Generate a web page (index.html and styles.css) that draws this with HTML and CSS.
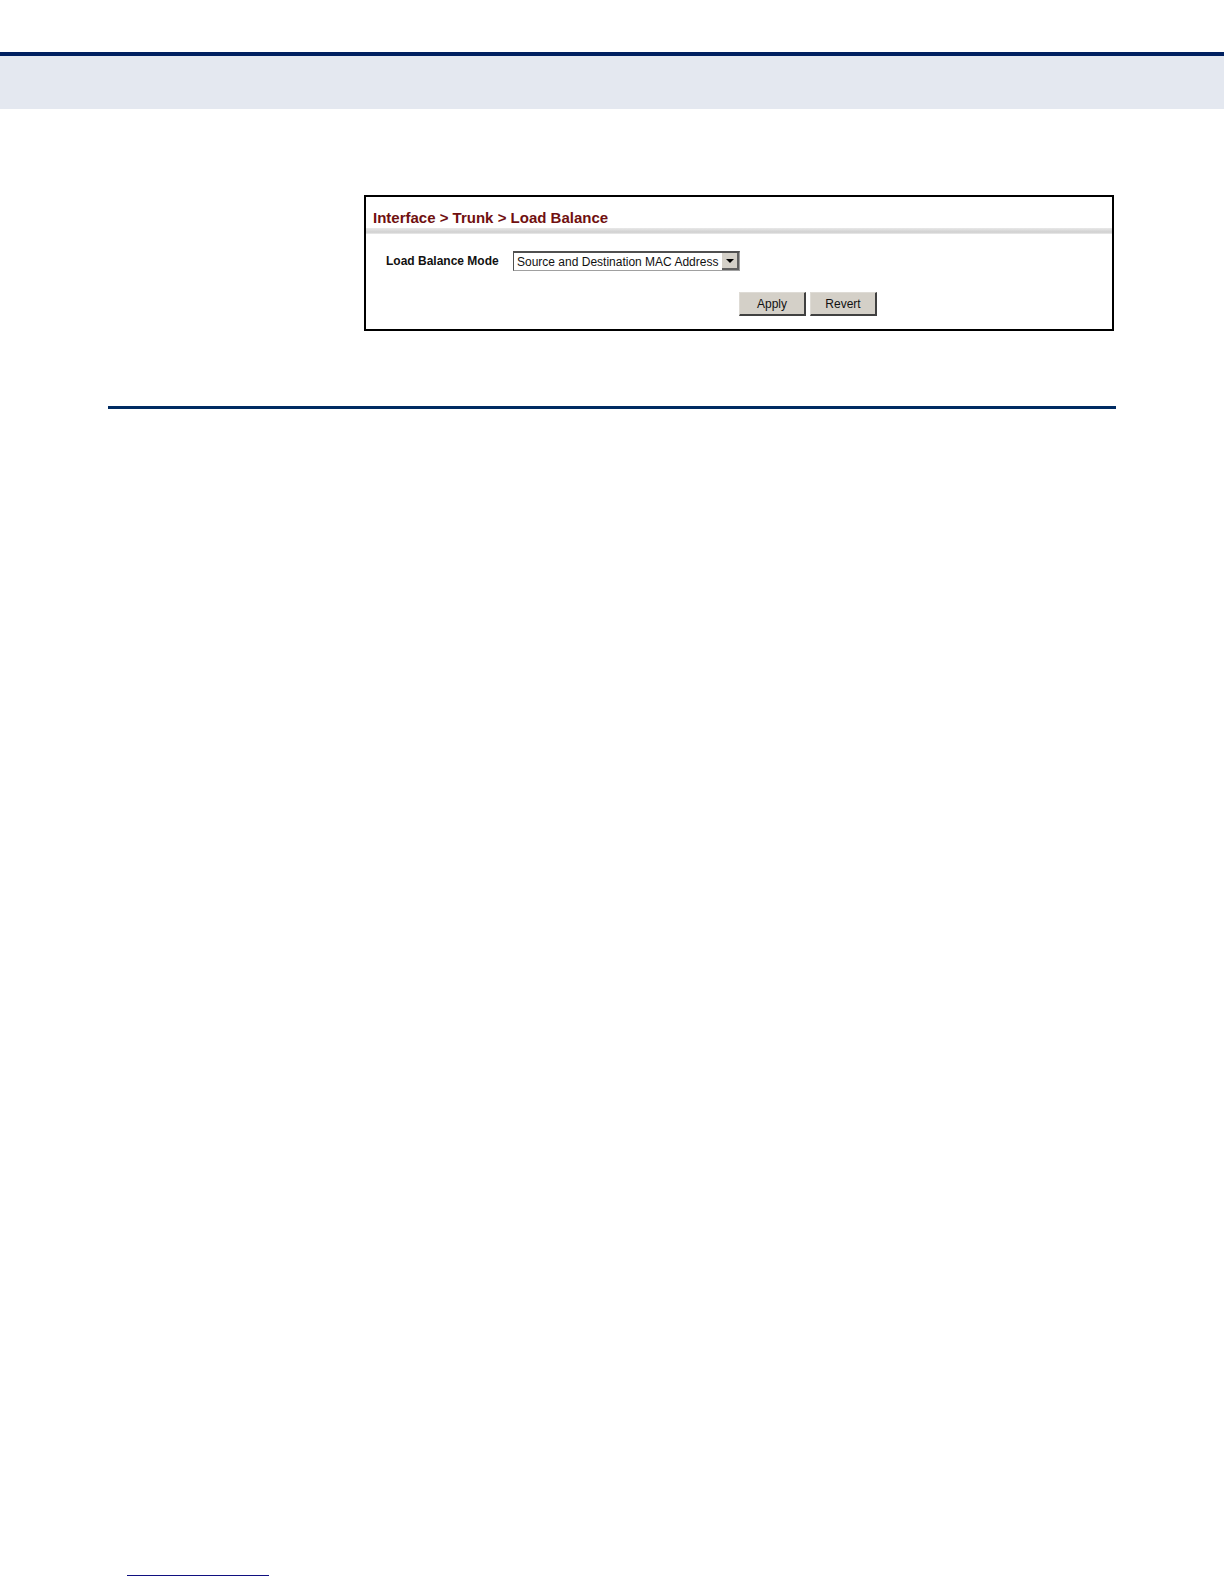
FILE: index.html
```html
<!DOCTYPE html>
<html lang="en">
<head>
<meta charset="utf-8">
<title>Interface &gt; Trunk &gt; Load Balance</title>
<link rel="stylesheet" href="styles.css">
</head>
<body>
<header class="page-header"></header>
<main class="content">
  <section class="panel">
    <h1 class="panel-title">Interface &gt; Trunk &gt; Load Balance</h1>
    <form class="panel-form">
      <div class="field">
        <label class="field-label" for="mode">Load Balance Mode</label>
        <div class="select-box">
          <select class="select" id="mode">
            <option>Source and Destination MAC Address</option>
          </select>
          <span class="select-arrow"><svg width="8" height="4" viewBox="0 0 8 4"><path d="M0 0h8L4 4z" fill="#000"/></svg></span>
        </div>
      </div>
      <div class="actions">
        <button class="button" type="button">Apply</button>
        <button class="button" type="reset">Revert</button>
      </div>
    </form>
  </section>
  <hr class="section-rule">
</main>
<footer class="page-footer"><div class="footer-line"></div></footer>
</body>
</html>
```
FILE: styles.css
```css
* { box-sizing: border-box; }

body {
  margin: 0;
  min-height: 100vh;
  display: flex;
  flex-direction: column;
  background: #fff;
  color: #111;
  font: 12px/16px "Liberation Sans", Arial, sans-serif;
}

.page-header {
  height: 57px;
  margin-top: 52px;
  border-top: 4px solid #002060;
  background: #e4e8f0;
}

.content {
  flex: 1;
  padding: 86px 108px 0;
}

.panel {
  margin: 0 2px 0 256px;
  border: 2px solid #000;
}

.panel-title {
  margin: 0;
  padding: 11px 7px 0;
  color: #701010;
  font-size: 15px;
  line-height: 20px;
}

.panel-title::after {
  content: "";
  display: block;
  height: 6px;
  margin: 0 -7px;
  background: linear-gradient(#e8e8e8, #d0d0d0 70%, #ececec);
}

.panel-form { padding: 17px 0 13px; }

.field {
  display: flex;
  align-items: center;
  padding-left: 20px;
}

.field-label {
  width: 127px;
  font-weight: bold;
}

.select-box { position: relative; }

.select {
  display: block;
  appearance: none;
  width: 227px;
  height: 20px;
  margin: 0;
  padding: 0 20px 0 3px;
  border: 1px solid #a0a0a0;
  border-top: 2px solid #505050;
  border-left-color: #505050;
  border-radius: 0;
  background: #fff;
  color: #111;
  font: inherit;
}

.select-arrow {
  position: absolute;
  top: 2px;
  right: 1px;
  width: 17px;
  height: 17px;
  display: flex;
  align-items: center;
  justify-content: center;
  border-right: 2px solid #606060;
  border-bottom: 2px solid #606060;
  background: #d4d0c8;
  pointer-events: none;
}

.actions {
  display: flex;
  gap: 4px;
  margin: 21px 0 0 50%;
}

.button {
  width: 67px;
  height: 24px;
  padding: 0;
  border: 1px solid #dedbd5;
  border-right: 2px solid #404040;
  border-bottom: 2px solid #404040;
  background: #d4d0c8;
  color: #111;
  font: inherit;
}

.section-rule {
  height: 3px;
  margin: 75px 0 0;
  border: 0;
  background: #002b62;
}

.page-footer { padding: 0 127px 8px; }

.footer-line {
  width: 142px;
  height: 1px;
  background: #101080;
}
```
